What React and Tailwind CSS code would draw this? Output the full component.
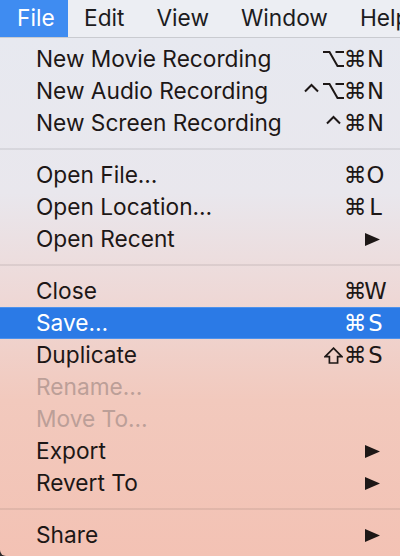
import React from "react";

const font = { fontFamily: "Inter, 'DejaVu Sans', sans-serif" };

const Arrow = () => (
  <svg width="15" height="13" viewBox="0 0 15 13" className="mr-[5px]">
    <path d="M0 0 L15 6.5 L0 13 Z" fill="currentColor" />
  </svg>
);

const Option = () => (
  <svg width="21" height="16" viewBox="0 0 21 16" fill="none" stroke="currentColor" strokeWidth="2">
    <path d="M0 1 H6.5 L14.5 15 H21 M12.5 1 H21" />
  </svg>
);

const Control = () => (
  <svg width="15" height="16" viewBox="0 0 15 16" fill="none" stroke="currentColor" strokeWidth="2">
    <path d="M1 8.5 L7.5 2 L14 8.5" />
  </svg>
);

const Shift = () => (
  <svg width="19" height="17" viewBox="0 0 19 17" fill="none" stroke="currentColor" strokeWidth="1.7" strokeLinejoin="miter">
    <path d="M9.5 1.2 L17.8 9.6 H13.6 V16 H5.4 V9.6 H1.2 Z" />
  </svg>
);

const glyphs = { opt: <Option />, ctrl: <Control />, shift: <Shift /> };

const Keys = ({ keys }) => (
  <div className="flex items-center">
    {keys.map((k, i) => (
      <span
        key={i}
        className={`flex justify-center ${i === keys.length - 1 ? "w-[19px]" : "w-[22px]"}`}
        style={{ fontFamily: "'DejaVu Sans', Inter, sans-serif" }}
      >
        {glyphs[k] || k}
      </span>
    ))}
  </div>
);

const Item = ({ label, keys, arrow, disabled, active }) => (
  <div
    className={`flex items-center justify-between h-[32px] pl-[36px] pr-[15px] ${
      active
        ? "bg-[#2b7ae6] text-white border-y border-[#4d92ec]"
        : disabled
        ? "text-[#bc9f98]"
        : "text-[#1d1716]"
    }`}
  >
    <span>{label}</span>
    {keys && <Keys keys={keys} />}
    {arrow && <Arrow />}
  </div>
);

const Separator = () => (
  <div className="h-[20px] flex items-center">
    <div className="h-[2px] w-full bg-[#000]/[0.07]" />
  </div>
);

export default function App() {
  return (
    <div className="w-[400px] h-[556px] bg-[#2e2a2a] overflow-hidden" style={font}>
      <div className="h-[38px] flex items-stretch bg-[#eceef3] border-b border-[#c9cbd0] text-[22.7px] text-[#1c1c1e]">
        <div className="w-[68px] shrink-0 bg-[#3f8cf1] text-white flex items-center pl-[17px]">File</div>
        <div className="flex items-center pl-[16px] gap-[32px] whitespace-nowrap">
          <span>Edit</span>
          <span>View</span>
          <span>Window</span>
          <span>Help</span>
        </div>
      </div>
      <div className="h-[518px] pt-[5px] text-[22.7px] rounded-bl-[6px] bg-[linear-gradient(180deg,#e7e9f0_0%,#e9e7ed_30%,#eed8d6_50%,#f2c9bd_70%,#f3c2b4_100%)]">
        <Item label="New Movie Recording" keys={["opt", "⌘", "N"]} />
        <Item label="New Audio Recording" keys={["ctrl", "opt", "⌘", "N"]} />
        <Item label="New Screen Recording" keys={["ctrl", "⌘", "N"]} />
        <Separator />
        <Item label="Open File…" keys={["⌘", "O"]} />
        <Item label="Open Location…" keys={["⌘", "L"]} />
        <Item label="Open Recent" arrow />
        <Separator />
        <Item label="Close" keys={["⌘", "W"]} />
        <Item label="Save…" keys={["⌘", "S"]} active />
        <Item label="Duplicate" keys={["shift", "⌘", "S"]} />
        <Item label="Rename…" disabled />
        <Item label="Move To…" disabled />
        <Item label="Export" arrow />
        <Item label="Revert To" arrow />
        <Separator />
        <Item label="Share" arrow />
      </div>
    </div>
  );
}
